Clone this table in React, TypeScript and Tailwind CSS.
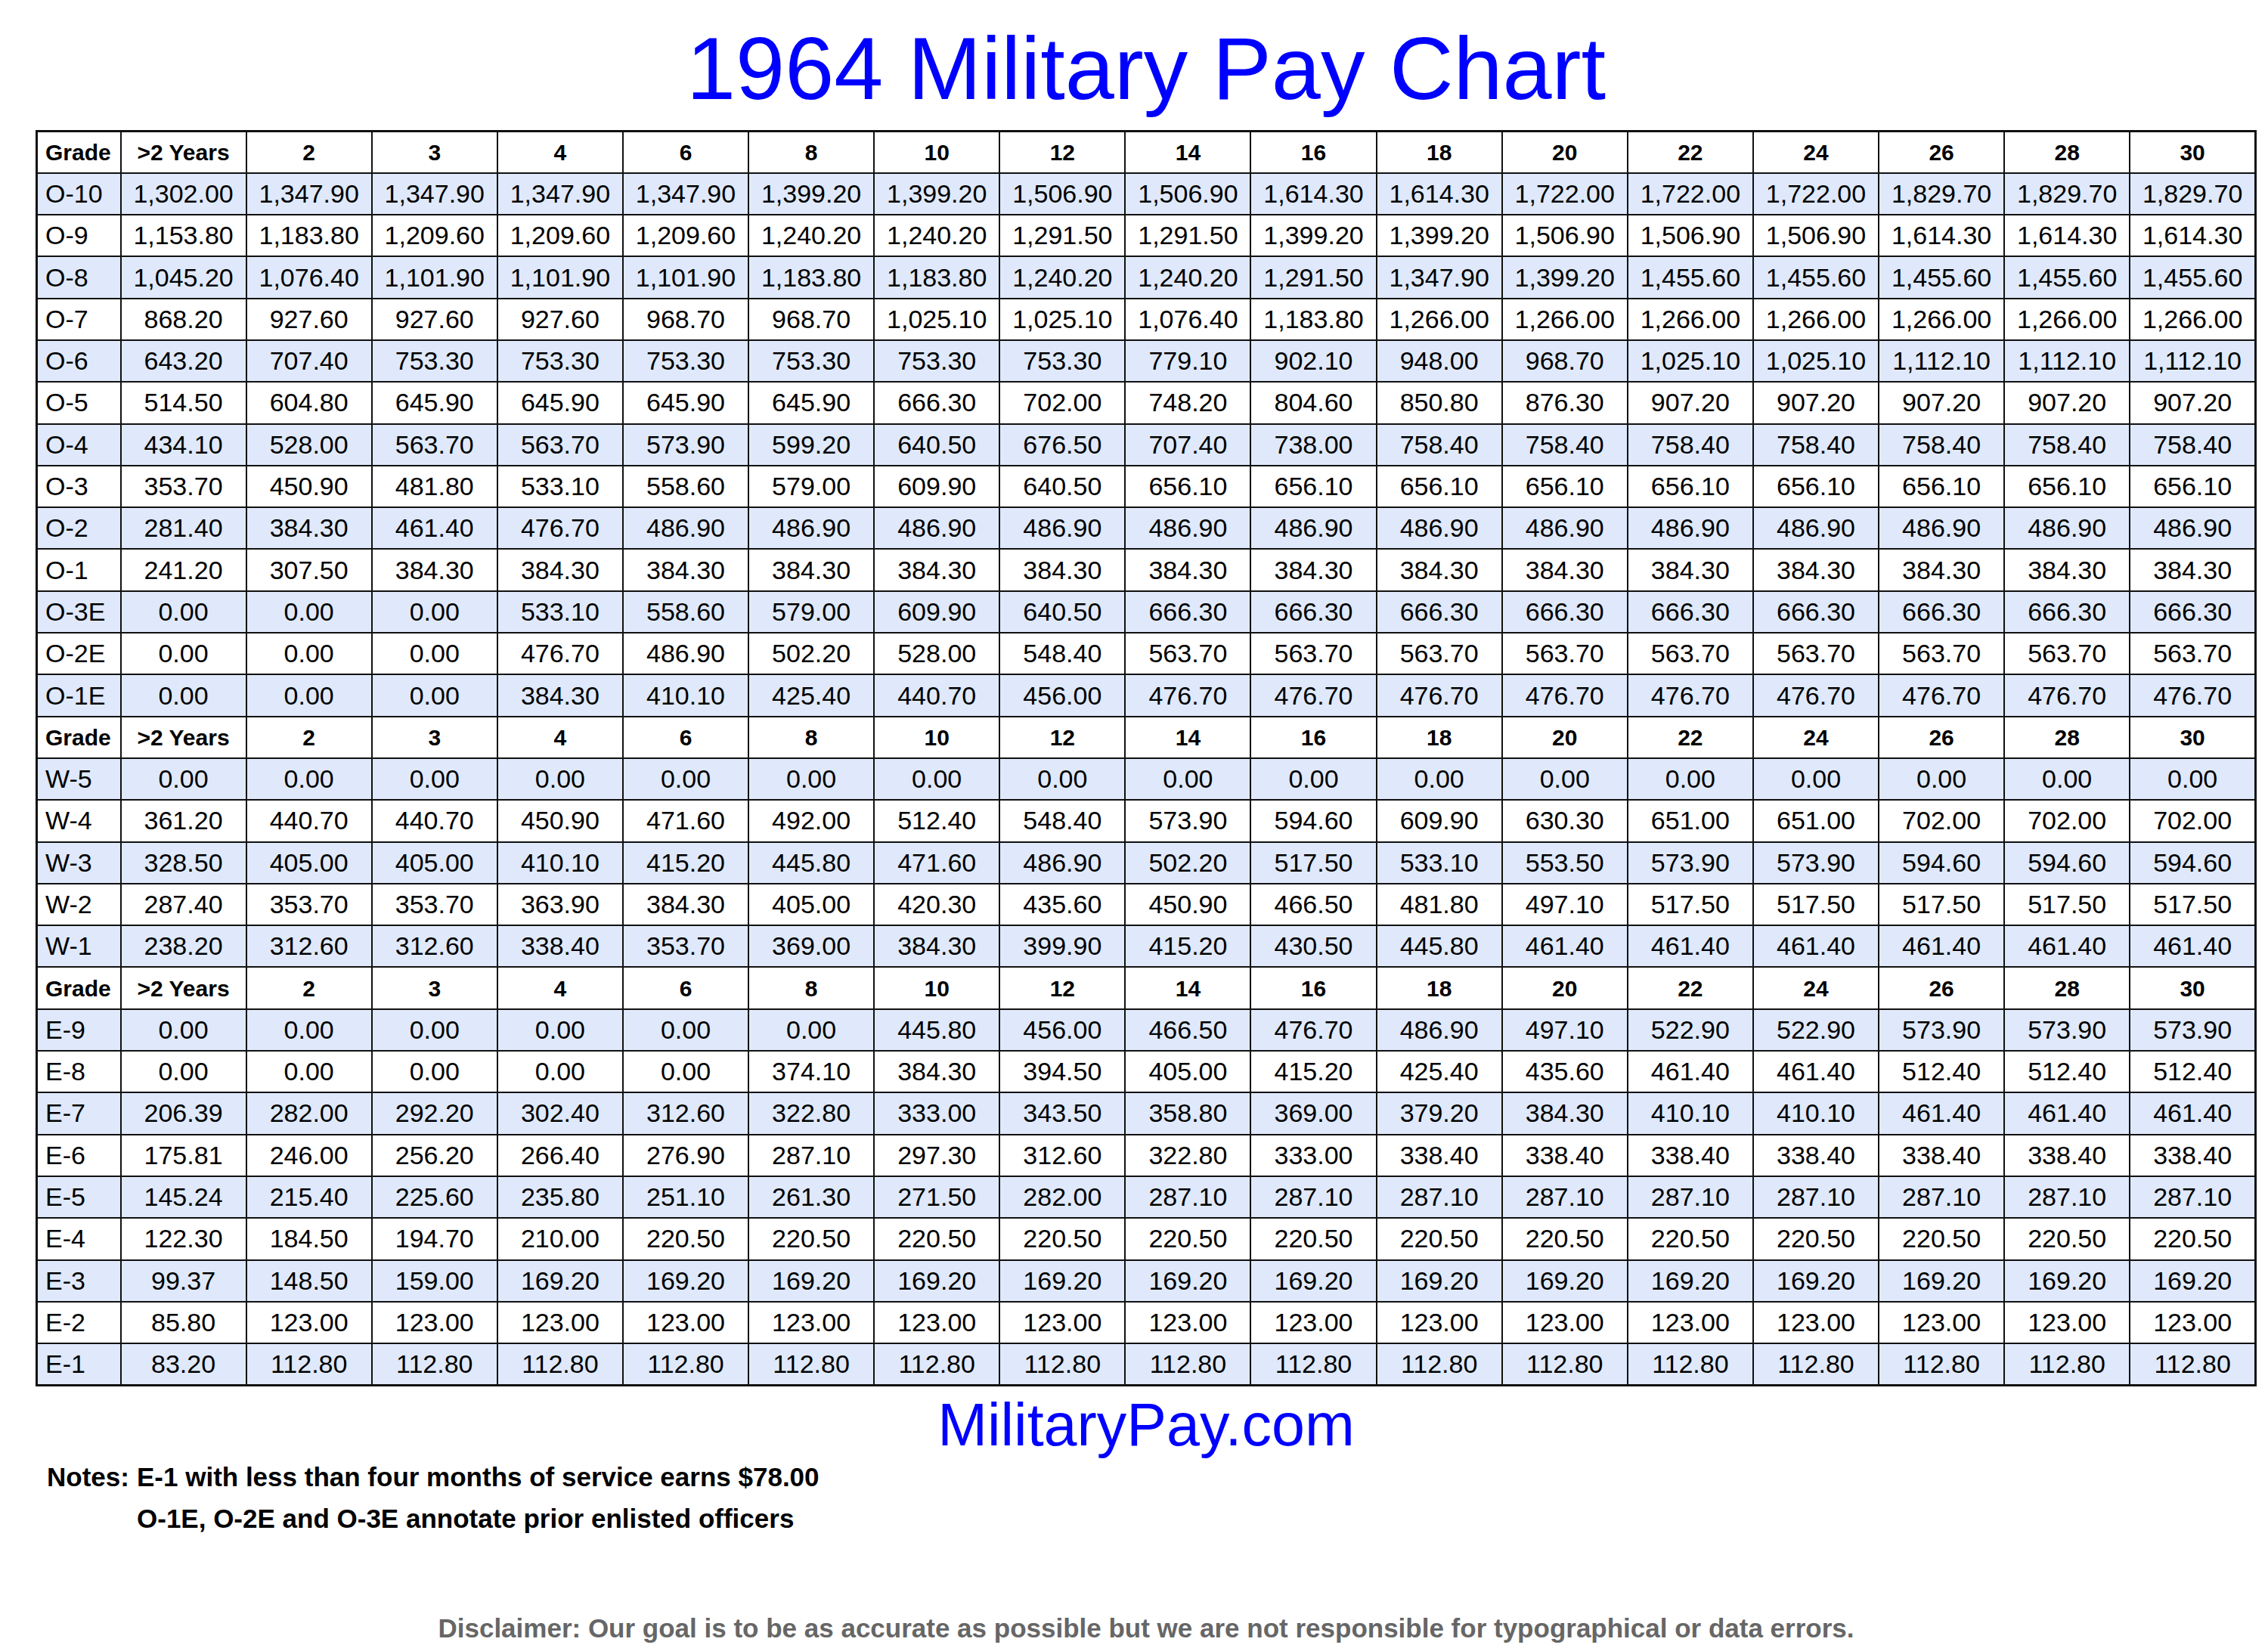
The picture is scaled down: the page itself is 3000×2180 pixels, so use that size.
const YEARS = ['>2 Years', '2', '3', '4', '6', '8', '10', '12', '14', '16', '18', '20', '22', '24', '26', '28', '30'];

// repeat a value n times
const rep = (v: string, n: number) => Array(n).fill(v);

const officers: [string, string[]][] = [
  ['O-10', ['1,302.00', '1,347.90', '1,347.90', '1,347.90', '1,347.90', '1,399.20', '1,399.20', '1,506.90', '1,506.90', '1,614.30', '1,614.30', '1,722.00', '1,722.00', '1,722.00', '1,829.70', '1,829.70', '1,829.70']],
  ['O-9', ['1,153.80', '1,183.80', '1,209.60', '1,209.60', '1,209.60', '1,240.20', '1,240.20', '1,291.50', '1,291.50', '1,399.20', '1,399.20', '1,506.90', '1,506.90', '1,506.90', '1,614.30', '1,614.30', '1,614.30']],
  ['O-8', ['1,045.20', '1,076.40', '1,101.90', '1,101.90', '1,101.90', '1,183.80', '1,183.80', '1,240.20', '1,240.20', '1,291.50', '1,347.90', '1,399.20', '1,455.60', '1,455.60', '1,455.60', '1,455.60', '1,455.60']],
  ['O-7', ['868.20', '927.60', '927.60', '927.60', '968.70', '968.70', '1,025.10', '1,025.10', '1,076.40', '1,183.80', ...rep('1,266.00', 7)]],
  ['O-6', ['643.20', '707.40', ...rep('753.30', 6), '779.10', '902.10', '948.00', '968.70', '1,025.10', '1,025.10', '1,112.10', '1,112.10', '1,112.10']],
  ['O-5', ['514.50', '604.80', '645.90', '645.90', '645.90', '645.90', '666.30', '702.00', '748.20', '804.60', '850.80', '876.30', ...rep('907.20', 5)]],
  ['O-4', ['434.10', '528.00', '563.70', '563.70', '573.90', '599.20', '640.50', '676.50', '707.40', '738.00', ...rep('758.40', 7)]],
  ['O-3', ['353.70', '450.90', '481.80', '533.10', '558.60', '579.00', '609.90', '640.50', ...rep('656.10', 9)]],
  ['O-2', ['281.40', '384.30', '461.40', '476.70', ...rep('486.90', 13)]],
  ['O-1', ['241.20', '307.50', ...rep('384.30', 15)]],
  ['O-3E', [...rep('0.00', 3), '533.10', '558.60', '579.00', '609.90', '640.50', ...rep('666.30', 9)]],
  ['O-2E', [...rep('0.00', 3), '476.70', '486.90', '502.20', '528.00', '548.40', ...rep('563.70', 9)]],
  ['O-1E', [...rep('0.00', 3), '384.30', '410.10', '425.40', '440.70', '456.00', ...rep('476.70', 9)]],
];

const warrants: [string, string[]][] = [
  ['W-5', rep('0.00', 17)],
  ['W-4', ['361.20', '440.70', '440.70', '450.90', '471.60', '492.00', '512.40', '548.40', '573.90', '594.60', '609.90', '630.30', '651.00', '651.00', '702.00', '702.00', '702.00']],
  ['W-3', ['328.50', '405.00', '405.00', '410.10', '415.20', '445.80', '471.60', '486.90', '502.20', '517.50', '533.10', '553.50', '573.90', '573.90', '594.60', '594.60', '594.60']],
  ['W-2', ['287.40', '353.70', '353.70', '363.90', '384.30', '405.00', '420.30', '435.60', '450.90', '466.50', '481.80', '497.10', ...rep('517.50', 5)]],
  ['W-1', ['238.20', '312.60', '312.60', '338.40', '353.70', '369.00', '384.30', '399.90', '415.20', '430.50', '445.80', ...rep('461.40', 6)]],
];

const enlisted: [string, string[]][] = [
  ['E-9', [...rep('0.00', 6), '445.80', '456.00', '466.50', '476.70', '486.90', '497.10', '522.90', '522.90', '573.90', '573.90', '573.90']],
  ['E-8', [...rep('0.00', 5), '374.10', '384.30', '394.50', '405.00', '415.20', '425.40', '435.60', '461.40', '461.40', '512.40', '512.40', '512.40']],
  ['E-7', ['206.39', '282.00', '292.20', '302.40', '312.60', '322.80', '333.00', '343.50', '358.80', '369.00', '379.20', '384.30', '410.10', '410.10', '461.40', '461.40', '461.40']],
  ['E-6', ['175.81', '246.00', '256.20', '266.40', '276.90', '287.10', '297.30', '312.60', '322.80', '333.00', ...rep('338.40', 7)]],
  ['E-5', ['145.24', '215.40', '225.60', '235.80', '251.10', '261.30', '271.50', '282.00', ...rep('287.10', 9)]],
  ['E-4', ['122.30', '184.50', '194.70', '210.00', ...rep('220.50', 13)]],
  ['E-3', ['99.37', '148.50', '159.00', ...rep('169.20', 14)]],
  ['E-2', ['85.80', ...rep('123.00', 16)]],
  ['E-1', ['83.20', ...rep('112.80', 16)]],
];

function HeaderRow() {
  return (
    <tr className="bg-white">
      <td className="h-[55.3px] border-2 border-[#111] pl-[10px] text-left text-[30px] font-bold">Grade</td>
      {YEARS.map((y) => (
        <td key={y} className="h-[55.3px] border-2 border-[#111] text-center text-[30px] font-bold">
          {y}
        </td>
      ))}
    </tr>
  );
}

function Section({ rows }: { rows: [string, string[]][] }) {
  return (
    <>
      <HeaderRow />
      {rows.map(([grade, pay], i) => (
        <tr key={grade} className={i % 2 === 0 ? 'bg-[#dfe9fb]' : 'bg-white'}>
          <td className="h-[55.3px] border-2 border-[#111] pl-[10px] text-left text-[34px]">{grade}</td>
          {pay.map((v, j) => (
            <td key={j} className="h-[55.3px] border-2 border-[#111] text-center text-[34px]">
              {v}
            </td>
          ))}
        </tr>
      ))}
    </>
  );
}

export default function App() {
  return (
    <div className="w-[3000px] h-[2180px] bg-white text-black font-['Liberation_Sans',Arial,sans-serif]">
      <div className="ml-[47px] w-[2938px] pt-[32px]">
        <h1 className="text-center text-[117px] leading-[117px] text-[#0000ff]">1964 Military Pay Chart</h1>

        <table className="mt-[23px] w-[2938px] table-fixed border-collapse border-[3px] border-[#111]">
          <colgroup>
            <col className="w-[111px]" />
          </colgroup>
          <tbody>
            <Section rows={officers} />
            <Section rows={warrants} />
            <Section rows={enlisted} />
          </tbody>
        </table>

        <div className="mt-[12px] text-center text-[79px] leading-[78px] text-[#0000ff]">MilitaryPay.com</div>

        <div className="mt-[2px] flex pl-[15px] text-[35px] leading-[55px] font-bold">
          <span className="w-[119px] shrink-0">Notes:</span>
          <div className="flex flex-col">
            <p>E-1 with less than four months of service earns $78.00</p>
            <p>O-1E, O-2E and O-3E annotate prior enlisted officers</p>
          </div>
        </div>

        <p className="mt-[100px] text-center text-[35px] leading-[35px] font-bold text-[#666]">
          Disclaimer: Our goal is to be as accurate as possible but we are not responsible for typographical or data errors.
        </p>
      </div>
    </div>
  );
}
